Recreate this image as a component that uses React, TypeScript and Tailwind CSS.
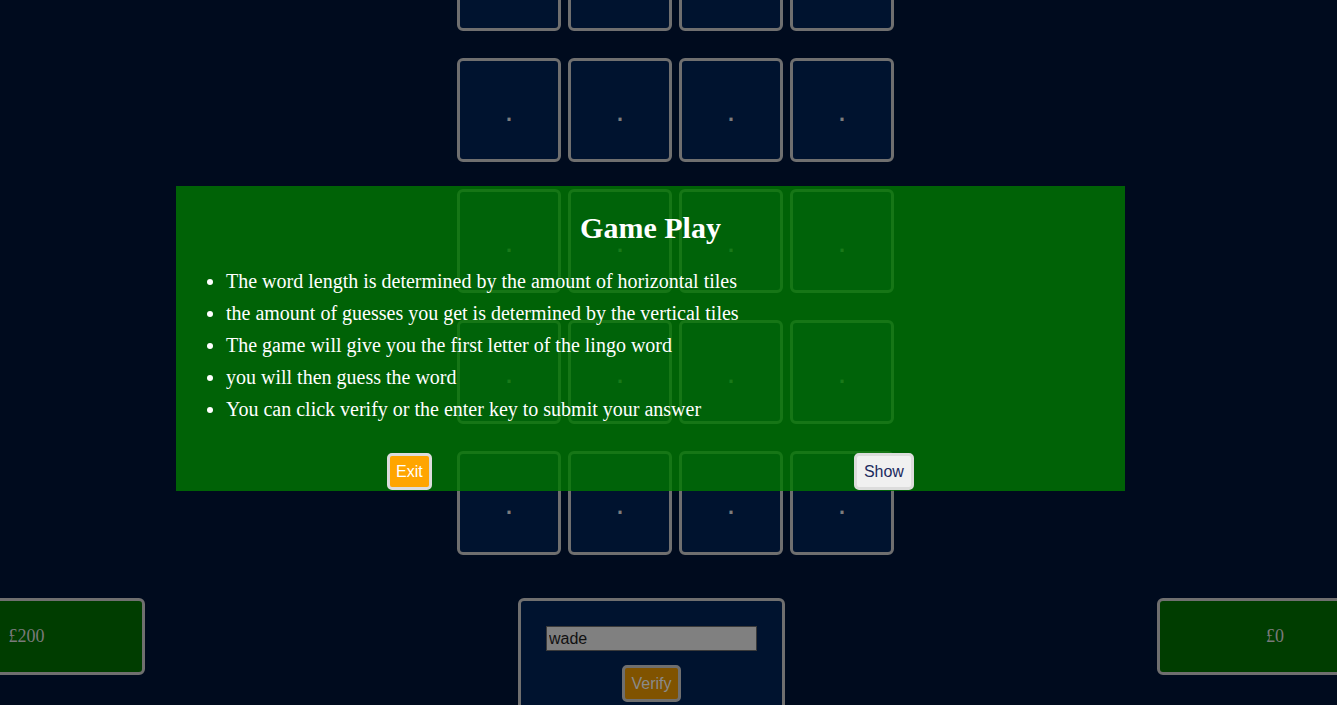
import React from "react";

const ROWS = 5;
const COLS = 4;

const RULES = [
  "The word length is determined by the amount of horizontal tiles",
  "the amount of guesses you get is determined by the vertical tiles",
  "The game will give you the first letter of the lingo word",
  "you will then guess the word",
  "You can click verify or the enter key to submit your answer",
];

function Tile() {
  return (
    <div className="flex h-[104px] w-[104px] items-center justify-center rounded-[6px] border-[3px] border-[#6f6f6f] bg-[#00132f]">
      <span className="mt-[0px] font-['Liberation_Sans',Arial,sans-serif] text-[32px] leading-none text-[#7c7c7c]">.</span>
    </div>
  );
}

export default function App() {
  return (
    <div className="relative h-[705px] w-full overflow-hidden bg-[#000b1e] font-['Liberation_Sans',Arial,sans-serif]">
      {/* board */}
      <div className="mt-[-73px] flex justify-center pl-[14px]">
        <div className="grid grid-cols-4 gap-x-[7px] gap-y-[27px]">
          {Array.from({ length: ROWS * COLS }).map((_, i) => (
            <Tile key={i} />
          ))}
        </div>
      </div>

      {/* scores + answer */}
      <div className="ml-[-92px] mt-[43px] flex items-start">
        <div className="flex h-[77px] w-[237px] shrink-0 items-center justify-center rounded-[6px] border-[3px] border-[#6f6f6f] bg-[#003d00] font-['Liberation_Serif',serif] text-[18px] text-[#7a7a7a]">
          £200
        </div>
        <div className="ml-[373px] flex h-[130px] w-[267px] shrink-0 flex-col items-center rounded-[6px] border-[3px] border-[#6f6f6f] bg-[#00132f] pt-[25px]">
          <input
            readOnly
            value="wade"
            className="h-[25px] w-[211px] border border-[#3a3a3a] bg-[#808080] px-[2px] text-[16px] text-[#111] outline-none"
          />
          <button className="mt-[14px] h-[37px] rounded-[5px] border-[3px] border-[#6f6f6f] bg-[#805300] px-[6px] text-[16px] text-[#8a8a8a]">
            Verify
          </button>
        </div>
        <div className="ml-[372px] flex h-[77px] w-[236px] shrink-0 items-center justify-center rounded-[6px] border-[3px] border-[#6f6f6f] bg-[#003d00] font-['Liberation_Serif',serif] text-[18px] text-[#7a7a7a]">
          £0
        </div>
      </div>

      {/* rules modal */}
      <div className="absolute left-[176px] top-[186px] flex h-[305px] w-[949px] flex-col bg-[#007800]/80 font-['Liberation_Serif',serif] text-white">
        <h2 className="mt-[25px] text-center text-[30px] font-bold leading-[34px]">Game Play</h2>
        <ul className="mt-[20px] list-disc pl-[50px] text-[20px] leading-[32px]">
          {RULES.map((r) => (
            <li key={r}>{r}</li>
          ))}
        </ul>
        <div className="mt-auto flex justify-around pb-[1px] font-['Liberation_Sans',Arial,sans-serif]">
          <button className="h-[37px] rounded-[5px] border-[3px] border-[#dcdcdc] bg-[#ffa500] px-[6px] text-[16px] text-white">
            Exit
          </button>
          <button className="h-[37px] rounded-[5px] border-[3px] border-[#dcdcdc] bg-[#f0f0f0] px-[7px] text-[16px] text-[#1b2a5e]">
            Show
          </button>
        </div>
      </div>
    </div>
  );
}
